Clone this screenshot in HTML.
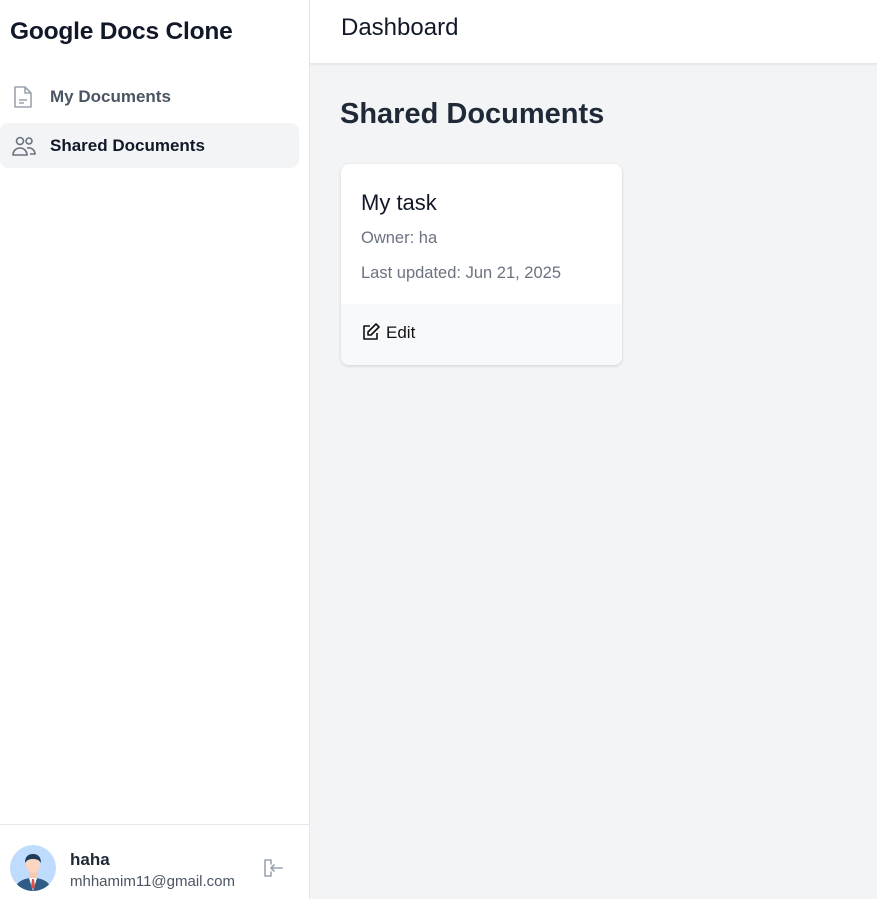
<!DOCTYPE html>
<html><head><style>
*{box-sizing:border-box;margin:0;padding:0}
body{width:877px;height:899px;font-family:"Liberation Sans",sans-serif;background:#f3f4f6;position:relative;overflow:hidden}
.side{position:absolute;left:0;top:0;width:310px;height:899px;background:#fff;border-right:1px solid #e5e7eb}
.logo{position:absolute;left:10px;top:18px;font-size:24.5px;font-weight:bold;color:#111827;letter-spacing:-0.2px}
.nav{position:absolute;left:0;width:299px;height:45px;border-radius:8px;display:flex;align-items:center;font-size:17px;font-weight:bold}
.nav svg{position:absolute;left:12px}
.nav span{position:absolute;left:50px;top:13px}
.foot{position:absolute;left:0;top:824px;width:309px;height:75px;border-top:1px solid #e5e7eb}
.hdr{position:absolute;left:310px;top:0;right:0;height:64px;background:#fff;border-bottom:1px solid #e5e7eb;box-shadow:0 1px 2px rgba(0,0,0,.06)}
.hdr h1{position:absolute;left:31px;top:14px;font-size:24px;font-weight:normal;color:#111827}
.h2{position:absolute;left:340px;top:98px;font-size:29px;font-weight:bold;color:#1f2937}
.card{position:absolute;left:341px;top:164px;width:281px;height:201px;background:#fff;border-radius:8px;box-shadow:0 1px 3px rgba(0,0,0,.15);overflow:hidden}
.cf{position:absolute;left:0;top:140px;width:100%;height:61px;background:#f8f9fb}
</style></head><body>
<div class="side">
<div class="logo">Google Docs Clone</div>
<div class="nav" style="top:74px;color:#4b5563">
<svg width="22" height="24" viewBox="0 0 22 24" fill="none" stroke="#9ca3af" stroke-width="1.6" stroke-linejoin="round"><path d="M3 2h10l6 6v14H3z"/><path d="M13 2v6h6"/><path d="M7 15h8M7 18h5"/></svg>
<span>My Documents</span></div>
<div class="nav" style="top:123px;background:#f3f4f6;color:#111827">
<svg width="24" height="22" viewBox="0 0 24 22" fill="none" stroke="#6b7280" stroke-width="1.6"><circle cx="8" cy="6" r="3.5"/><path d="M1 20c0-4 3-7 7-7s7 3 7 7z"/><circle cx="17" cy="6" r="3"/><path d="M15 13c4-1 8 2 8 6h-5"/></svg>
<span>Shared Documents</span></div>
<div class="foot">
<svg style="position:absolute;left:10px;top:20px" width="46" height="46" viewBox="0 0 46 46"><defs><clipPath id="c"><circle cx="23" cy="23" r="23"/></clipPath></defs><g clip-path="url(#c)"><circle cx="23" cy="23" r="23" fill="#bfdbfe"/><path d="M4 46c2-9 9-13 19-13s17 4 19 13z" fill="#2f5b85"/><path d="M19 33l4 13 4-13z" fill="#fff"/><path d="M22 34h2l1 8-2 2-2-2z" fill="#d9534f"/><rect x="19" y="25" width="8" height="8" fill="#f5c9b4"/><ellipse cx="23" cy="20" rx="7" ry="8" fill="#fbd5c0"/><path d="M15 18c0-7 4-9 8-9s8 2 8 9c-2-3-4-4-8-4s-6 1-8 4z" fill="#1f3b5a"/></g></svg>
<div style="position:absolute;left:70px;top:25px;font-size:17px;font-weight:bold;color:#1f2937">haha</div>
<div style="position:absolute;left:70px;top:48px;font-size:15px;color:#4b5563">mhhamim11@gmail.com</div>
<svg style="position:absolute;left:262px;top:32px" width="22" height="22" viewBox="0 0 22 22" fill="none" stroke="#9ca3af" stroke-width="1.6" stroke-linecap="round" stroke-linejoin="round"><path d="M9 7V3H3v16h6v-4"/><path d="M20 11H9M12 8l-3 3 3 3"/></svg>
</div>
</div>
<div class="hdr"><h1>Dashboard</h1></div>
<div class="h2">Shared Documents</div>
<div class="card">
<div style="position:absolute;left:20px;top:26px;font-size:22px;color:#111827">My task</div>
<div style="position:absolute;left:20px;top:65px;font-size:16.5px;color:#6b7280">Owner: ha</div>
<div style="position:absolute;left:20px;top:100px;font-size:16.5px;color:#6b7280">Last updated: Jun 21, 2025</div>
<div class="cf">
<svg style="position:absolute;left:21px;top:19px" width="18" height="18" viewBox="0 0 18 18" fill="none" stroke="#111" stroke-width="1.6" stroke-linejoin="round"><path d="M8 3H2v13h13v-6"/><path d="M14 1l3 3-8 8H6V9z"/></svg>
<div style="position:absolute;left:45px;top:19px;font-size:17px;color:#111">Edit</div>
</div>
</div>
</body></html>
